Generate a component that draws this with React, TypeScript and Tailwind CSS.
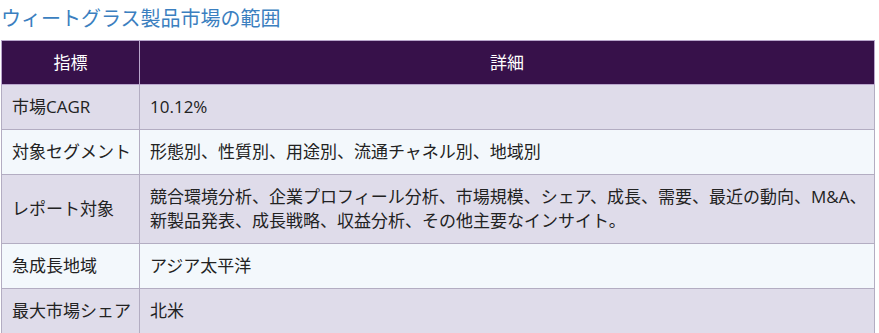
import React from 'react';

const rows = [
  { label: '市場CAGR', value: ['10.12%'] },
  { label: '対象セグメント', value: ['形態別、性質別、用途別、流通チャネル別、地域別'] },
  {
    label: 'レポート対象',
    value: [
      '競合環境分析、企業プロフィール分析、市場規模、シェア、成長、需要、最近の動向、M&A、',
      '新製品発表、成長戦略、収益分析、その他主要なインサイト。',
    ],
  },
  { label: '急成長地域', value: ['アジア太平洋'] },
  { label: '最大市場シェア', value: ['北米'] },
];

const App = () => {
  return (
    <div
      className="w-[879px] h-[333px] bg-white pl-[1px] pr-[4px]"
      style={{ fontFamily: '"Open Sans", "Noto Sans CJK JP", sans-serif' }}
    >
      <h2 className="h-[40px] pt-[5px] text-[20px] leading-[28px] text-[#3b7fc0] font-normal">
        ウィートグラス製品市場の範囲
      </h2>
      <table className="w-full table-fixed border-collapse text-[17px] text-[#222]">
        <thead>
          <tr className="bg-[#37114a] text-white">
            <th className="w-[138px] h-[44px] border border-[#b9a6cc] font-normal text-center">指標</th>
            <th className="h-[44px] border border-[#b9a6cc] font-normal text-center">詳細</th>
          </tr>
        </thead>
        <tbody>
          {rows.map((row, i) => (
            <tr key={i} className={i % 2 === 0 ? 'bg-[#dfdcea]' : 'bg-[#f3f8fc]'}>
              <td className="border border-[#b3adc2] pl-[10px] pr-[4px] py-[10px] leading-[24px] align-middle whitespace-nowrap">
                {row.label}
              </td>
              <td className="border border-[#b3adc2] px-[10px] py-[10px] leading-[24px] align-middle">
                {row.value.map((line, j) => (
                  <div key={j} className="whitespace-nowrap">
                    {line}
                  </div>
                ))}
              </td>
            </tr>
          ))}
        </tbody>
      </table>
    </div>
  );
};

export default App;
